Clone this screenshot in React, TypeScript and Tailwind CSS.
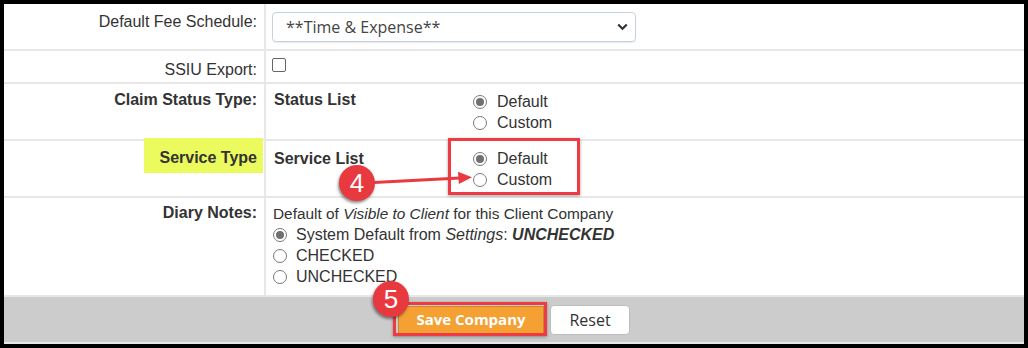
import React from "react";

function Radio({ checked }: { checked?: boolean }) {
  return (
    <span className="inline-flex w-[14px] h-[14px] rounded-full border border-[#7a7a7a] bg-white items-center justify-center shrink-0">
      {checked && <span className="w-[8px] h-[8px] rounded-full bg-[#707070]" />}
    </span>
  );
}

function RadioLine({ checked, children, gap }: { checked?: boolean; children: React.ReactNode; gap: string }) {
  return (
    <div className={`flex items-center ${gap}`}>
      <Radio checked={checked} />
      <span>{children}</span>
    </div>
  );
}

function Badge({ n, cls }: { n: string; cls: string }) {
  return (
    <div
      className={`absolute ${cls} w-[36px] h-[36px] rounded-full bg-[#e8393f] text-white flex items-center justify-center text-[26px] leading-none font-['Liberation_Sans',Arial,sans-serif] shadow-[-1px_2px_3px_rgba(0,0,0,0.45)]`}
    >
      {n}
    </div>
  );
}

export default function App() {
  const cell = "border-[#e7e7e7]";
  return (
    <div className="relative w-[1028px] h-[348px] bg-black p-[4px] font-['Liberation_Sans',Arial,sans-serif] text-[16px] text-[#333]">
      <div className="bg-white h-full flex flex-col">
        {/* Row 1 */}
        <div className={`flex h-[47px] border-b-2 ${cell}`}>
          <div className={`w-[262px] shrink-0 text-right pr-[7px] pt-[9px] leading-[18px] border-r-2 ${cell}`}>
            Default Fee Schedule:
          </div>
          <div className="pl-[6px] pt-[8px]">
            <div className="w-[364px] h-[30px] border border-[#c6d1de] rounded-[4px] flex items-center justify-between pl-[13px] pr-[7px] font-['Open_Sans',sans-serif] text-[16px] text-[#444] shadow-[0_1px_1px_rgba(0,0,0,0.08)]">
              <span>**Time &amp; Expense**</span>
              <svg width="11" height="8" viewBox="0 0 11 8">
                <path d="M1.2 1.5 L5.5 5.8 L9.8 1.5" fill="none" stroke="#333" strokeWidth="2.2" />
              </svg>
            </div>
          </div>
        </div>

        {/* Row 2 */}
        <div className={`flex h-[33px] border-b-2 ${cell}`}>
          <div className={`w-[262px] shrink-0 text-right pr-[7px] pt-[10px] leading-[18px] border-r-2 ${cell}`}>
            SSIU Export:
          </div>
          <div className="pl-[6px] pt-[7px]">
            <span className="block w-[14px] h-[14px] rounded-[2px] border-[1.5px] border-[#666] bg-white" />
          </div>
        </div>

        {/* Row 3 */}
        <div className={`flex h-[57px] border-b-2 ${cell}`}>
          <div className={`w-[262px] shrink-0 text-right pr-[7px] pt-[7px] leading-[18px] font-bold border-r-2 ${cell}`}>
            Claim Status Type:
          </div>
          <div className="flex pl-[8px]">
            <div className="w-[199px] pt-[7px] leading-[18px] font-bold">Status List</div>
            <div className="pt-[7px] leading-[21px]">
              <RadioLine checked gap="gap-[10px]">Default</RadioLine>
              <RadioLine gap="gap-[10px]">Custom</RadioLine>
            </div>
          </div>
        </div>

        {/* Row 4 */}
        <div className={`flex h-[57px] border-b-2 ${cell}`}>
          <div className={`relative w-[262px] shrink-0 text-right pr-[7px] pt-[8px] leading-[18px] font-bold border-r-2 ${cell}`}>
            <div className="absolute left-[140px] top-[-3px] w-[119px] h-[35px] bg-[#ebfa5c]" />
            <span className="relative">Service Type</span>
          </div>
          <div className="flex pl-[8px]">
            <div className="w-[199px] pt-[9px] leading-[18px] font-bold">Service List</div>
            <div className="pt-[7px] leading-[21px]">
              <RadioLine checked gap="gap-[10px]">Default</RadioLine>
              <RadioLine gap="gap-[10px]">Custom</RadioLine>
            </div>
          </div>
        </div>

        {/* Row 5 */}
        <div className={`flex h-[99px] border-b-2 ${cell}`}>
          <div className={`w-[262px] shrink-0 text-right pr-[7px] pt-[6px] leading-[18px] font-bold border-r-2 ${cell}`}>
            Diary Notes:
          </div>
          <div className="pl-[7px] pt-[5px] leading-[21px]">
            <div className="text-[15.4px]">
              Default of <i>Visible to Client</i> for this Client Company
            </div>
            <RadioLine checked gap="gap-[9px]">
              System Default from <i>Settings</i>: <b><i>UNCHECKED</i></b>
            </RadioLine>
            <RadioLine gap="gap-[9px]">CHECKED</RadioLine>
            <RadioLine gap="gap-[9px]">UNCHECKED</RadioLine>
          </div>
        </div>

        {/* Footer */}
        <div className="h-[47px] bg-[#cccccc] border-b-2 border-[#e8e8e8] flex items-center justify-center gap-[6px] font-['Open_Sans',sans-serif]">
          <button className="w-[146px] h-[28px] bg-[#f4a033] border border-[#c8892c] text-white font-bold text-[15px] leading-none">
            Save Company
          </button>
          <button className="w-[80px] h-[30px] bg-white border border-[#bcbcbc] rounded-[4px] text-[16px] text-[#333] leading-none">
            Reset
          </button>
        </div>
      </div>

      {/* Annotations */}
      <div className="absolute left-[448px] top-[138px] w-[132px] h-[57px] border-[3px] border-[#ee3b43] shadow-[0_1px_3px_rgba(0,0,0,0.35)]" />
      <svg className="absolute left-[370px] top-[168px]" width="110" height="22" viewBox="0 0 110 22">
        <line x1="4" y1="14.5" x2="90" y2="10" stroke="#ea3a41" strokeWidth="3" />
        <polygon points="102,9.3 88,3.8 88.8,16" fill="#ea3a41" />
      </svg>
      <Badge n="4" cls="left-[339px] top-[165px]" />

      <div className="absolute left-[393px] top-[302px] w-[154px] h-[34px] border-[3px] border-[#ee3b43] shadow-[0_1px_3px_rgba(0,0,0,0.35)]" />
      <Badge n="5" cls="left-[373px] top-[281px]" />
    </div>
  );
}
